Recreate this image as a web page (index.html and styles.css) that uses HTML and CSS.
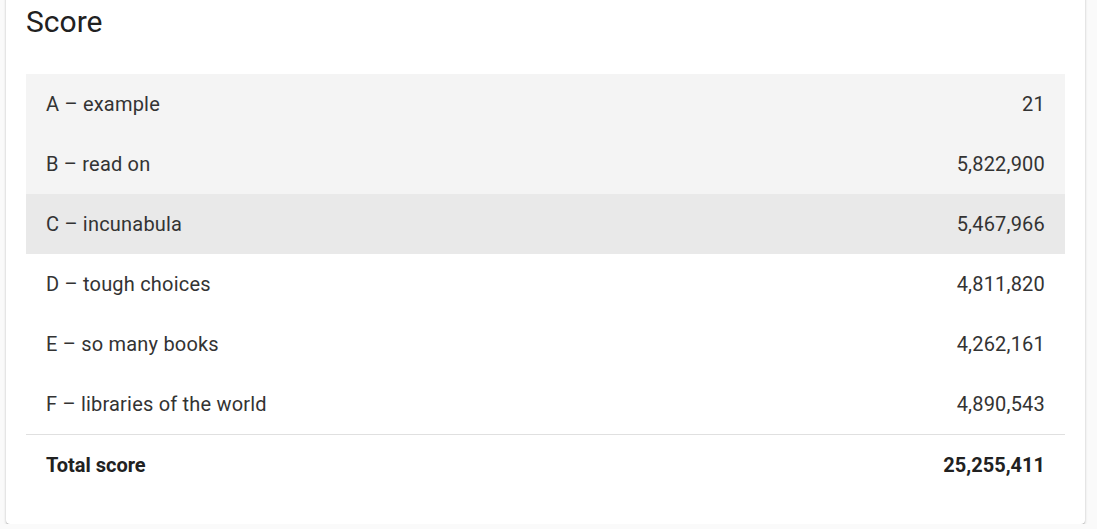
FILE: index.html
```html
<!DOCTYPE html>
<html>
<head>
<meta charset="utf-8">
<link rel="stylesheet" href="styles.css">
</head>
<body>
<div class="card">
  <h2 class="title">Score</h2>
  <div class="table">
    <div class="row shaded"><span>A – example</span><span>21</span></div>
    <div class="row shaded"><span>B – read on</span><span>5,822,900</span></div>
    <div class="row active"><span>C – incunabula</span><span>5,467,966</span></div>
    <div class="row"><span>D – tough choices</span><span>4,811,820</span></div>
    <div class="row"><span>E – so many books</span><span>4,262,161</span></div>
    <div class="row"><span>F – libraries of the world</span><span>4,890,543</span></div>
    <div class="row total"><span>Total score</span><span>25,255,411</span></div>
  </div>
</div>
</body>
</html>
```

FILE: styles.css
```css
html, body {
  margin: 0;
  padding: 0;
  background: #fafafa;
  font-family: Roboto, "Liberation Sans", sans-serif;
}
body {
  padding: 0 12px 0 6px;
}
.card {
  width: 1079px;
  box-sizing: border-box;
  margin-top: -20px;
  padding: 20px 20px 29px;
  background: #fff;
  border-radius: 4px;
  box-shadow: 0 1px 3px rgba(0,0,0,0.2), 0 1px 1px rgba(0,0,0,0.14), 0 2px 1px -1px rgba(0,0,0,0.12);
}
.title {
  margin: 0 0 30px;
  font-size: 30px;
  line-height: 44px;
  font-weight: 400;
  color: #212121;
}
.table {
  display: flex;
  flex-direction: column;
}
.row {
  display: flex;
  justify-content: space-between;
  align-items: center;
  height: 60px;
  padding: 0 20px;
  font-size: 20px;
  letter-spacing: 0.2px;
  color: #333;
}
.row.shaded {
  background: #f4f4f4;
}
.row.active {
  background: #e9e9e9;
}
.row.total {
  border-top: 1px solid #e0e0e0;
  font-weight: 700;
  letter-spacing: 0;
  color: #212121;
}
```
